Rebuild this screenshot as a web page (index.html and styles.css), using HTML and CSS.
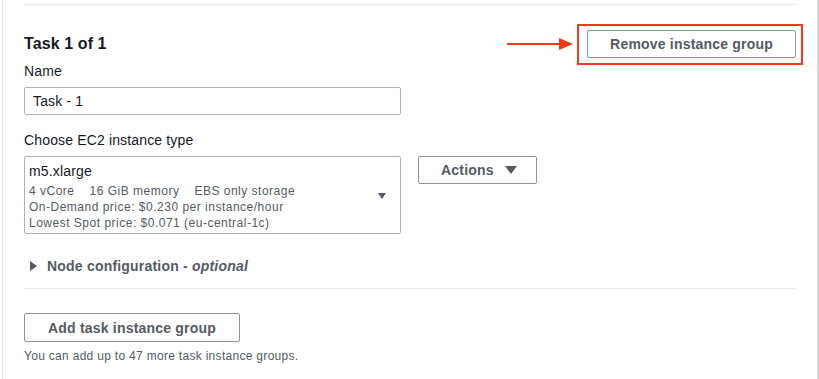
FILE: index.html
```html
<!DOCTYPE html>
<html lang="en">
  <head>
    <meta charset="UTF-8" />
    <meta name="viewport" content="width=device-width, initial-scale=1.0" />
    <title>Task instance group</title>
    <link rel="stylesheet" href="styles.css">
  </head>
  <body>
    <div class="panel">
      <hr class="divider top" />

      <div class="group-header">
        <h2>Task 1 of 1</h2>
        <div class="remove-wrap">
          <!-- annotation arrow + box -->
          <svg class="arrow" width="68" height="14" viewBox="0 0 68 14">
            <line x1="0" y1="7" x2="56" y2="7" stroke="#f03a1e" stroke-width="2" />
            <polygon points="52,1 66,7 52,13" fill="#f03a1e" />
          </svg>
          <div class="highlight"></div>
          <button class="btn">Remove instance group</button>
        </div>
      </div>

      <label class="field-label">Name</label>
      <input class="text-input" type="text" value="Task - 1" />

      <label class="field-label second">Choose EC2 instance type</label>
      <div class="type-row">
        <div class="type-select">
          <div class="type-name">m5.xlarge</div>
          <div class="type-meta">
            <span>4 vCore</span><span>16 GiB memory</span><span>EBS only storage</span>
          </div>
          <div class="type-meta">On-Demand price: $0.230 per instance/hour</div>
          <div class="type-meta">Lowest Spot price: $0.071 (eu-central-1c)</div>
          <svg class="caret" width="8" height="6" viewBox="0 0 8 6">
            <polygon points="0,0 8,0 4,6" fill="#545b64" />
          </svg>
        </div>
        <button class="btn actions">
          Actions
          <svg width="12" height="8" viewBox="0 0 12 8">
            <polygon points="0,0 12,0 6,8" fill="#545b64" />
          </svg>
        </button>
      </div>

      <div class="expander">
        <svg width="7" height="10" viewBox="0 0 7 10">
          <polygon points="0,0 7,5 0,10" fill="#545b64" />
        </svg>
        <span>Node configuration - <em>optional</em></span>
      </div>

      <hr class="divider" />

      <button class="btn add">Add task instance group</button>
      <p class="hint">You can add up to 47 more task instance groups.</p>
    </div>
  </body>
</html>
```

FILE: styles.css
```css
body {
  margin: 0;
  background: #fff;
  color: #16191f;
  font-family: "Liberation Sans", Arial, sans-serif;
  font-size: 14px;
}
.panel {
  margin-left: 2px;
  height: 379px;
  box-sizing: border-box;
  border-left: 1px solid #e6e6e6;
  border-right: 2px solid #d9d9d9;
  padding: 4px 21px 0 21px;
}
.divider {
  border: none;
  border-top: 1px solid #eaeded;
  margin: 12px 0 0 0;
}
.divider.top {
  margin: 0;
}
.group-header {
  display: flex;
  justify-content: space-between;
  align-items: center;
  margin-top: 25px;
  height: 28px;
}
.group-header h2 {
  margin: 0;
  font-size: 16px;
  font-weight: bold;
  letter-spacing: 0.1px;
}
.remove-wrap {
  position: relative;
}
.highlight {
  position: absolute;
  left: -10px;
  top: -6px;
  right: -7px;
  bottom: -7px;
  border: 2px solid #f03a1e;
}
.arrow {
  position: absolute;
  left: -80px;
  top: 7px;
}
.btn {
  position: relative;
  background: #fff;
  border: 1px solid #8d949c;
  border-radius: 2px;
  color: #545b64;
  font-family: inherit;
  font-size: 14px;
  font-weight: bold;
  height: 28px;
  padding: 0 22px;
  letter-spacing: 0.2px;
  cursor: pointer;
}
.field-label {
  display: block;
  line-height: 20px;
  margin-top: 3px;
  letter-spacing: 0.15px;
}
.field-label.second {
  margin-top: 15px;
}
.text-input {
  display: block;
  box-sizing: border-box;
  width: 377px;
  height: 28px;
  margin-top: 6px;
  padding: 0 8px;
  border: 1px solid #aab7b8;
  border-radius: 2px;
  font-family: inherit;
  font-size: 14px;
  letter-spacing: 0.15px;
  color: #16191f;
}
.type-row {
  display: flex;
  align-items: flex-start;
  gap: 17px;
  margin-top: 6px;
}
.type-select {
  position: relative;
  box-sizing: border-box;
  width: 377px;
  border: 1px solid #aab7b8;
  border-radius: 2px;
  padding: 4px 5px 2px 4px;
}
.type-name {
  line-height: 20px;
  margin-bottom: 2px;
  letter-spacing: 0.15px;
}
.type-meta {
  font-size: 12px;
  line-height: 16px;
  letter-spacing: 0.5px;
  color: #545b64;
}
.type-meta span {
  margin-right: 15px;
}
.caret {
  position: absolute;
  right: 14px;
  top: 36px;
}
.actions {
  height: 28px;
  padding: 0 19px 0 22px;
  display: flex;
  align-items: center;
  gap: 11px;
}
.expander {
  display: flex;
  align-items: center;
  gap: 10px;
  margin-top: 22px;
  padding-left: 6px;
  line-height: 20px;
  font-weight: bold;
  letter-spacing: 0.2px;
  color: #545b64;
}
.expander em {
  font-style: italic;
}
.add {
  margin-top: 24px;
  height: 29px;
  padding: 0 23px;
}
.hint {
  margin: 6px 0 0 0;
  font-size: 12px;
  line-height: 16px;
  letter-spacing: 0.3px;
  color: #545b64;
}
```
